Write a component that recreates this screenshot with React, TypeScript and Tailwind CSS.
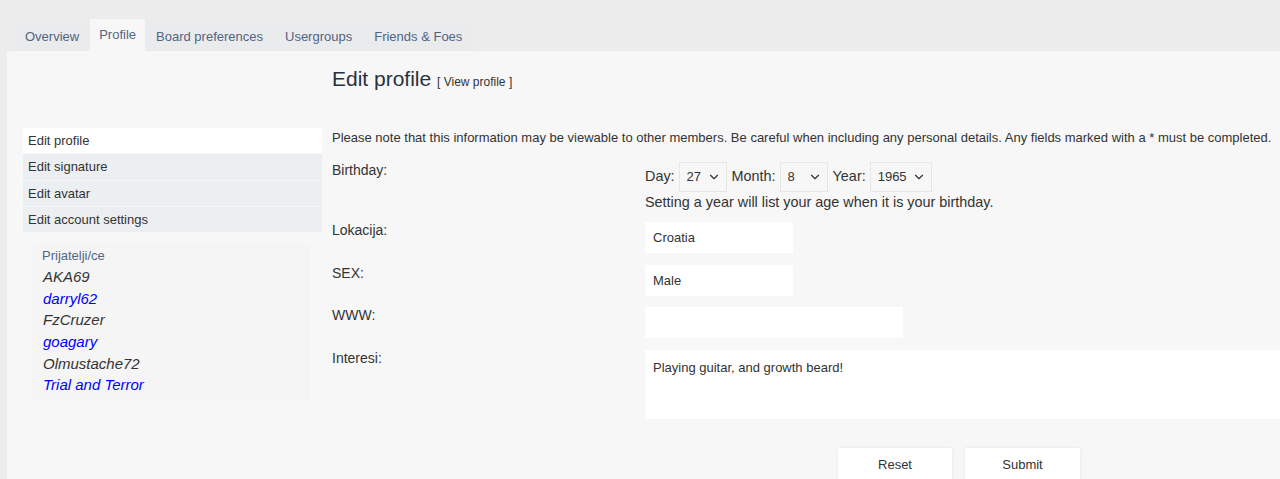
import { ChevronDown } from 'lucide-react'

const tabs = ['Overview', 'Profile', 'Board preferences', 'Usergroups', 'Friends & Foes']
const menu = ['Edit profile', 'Edit signature', 'Edit avatar', 'Edit account settings']
const friends = [
  { name: 'AKA69', online: false },
  { name: 'darryl62', online: true },
  { name: 'FzCruzer', online: false },
  { name: 'goagary', online: true },
  { name: 'Olmustache72', online: false },
  { name: 'Trial and Terror', online: true },
]

function Select({ value, width }: { value: string; width: string }) {
  return (
    <span className={`relative inline-block ${width}`}>
      <select
        defaultValue={value}
        className="h-[30px] w-full appearance-none border border-[#e6e6e6] bg-[#f7f7f7] pl-[7px] text-[13px] text-[#333] outline-none"
      >
        <option>{value}</option>
      </select>
      <ChevronDown size={14} strokeWidth={2} className="pointer-events-none absolute right-[6px] top-[8px] text-[#333]" />
    </span>
  )
}

function Row({ label, children, className = '' }: { label: string; children: React.ReactNode; className?: string }) {
  return (
    <div className={`grid grid-cols-[313px_1fr] ${className}`}>
      <label className="text-[14px] leading-[17px] text-[#333]">{label}</label>
      <div>{children}</div>
    </div>
  )
}

export default function App() {
  return (
    <div className="min-h-screen overflow-hidden bg-[#ececec] font-['Liberation_Sans',Arial,sans-serif] text-[#333]">
      {/* Tabs */}
      <nav className="flex pl-[14px] pt-[19px]">
        {tabs.map((t) => (
          <div
            key={t}
            className={
              t === 'Profile'
                ? 'h-[32px] bg-[#f7f7f7] px-[9px] pt-[6px] text-[13px] text-[#536482]'
                : 'h-[32px] bg-[#e9ebed] px-[11px] pt-[8px] text-[13px] text-[#536482]'
            }
          >
            {t}
          </div>
        ))}
      </nav>

      <div className="ml-[7px] flex min-h-[428px] bg-[#f7f7f7]">
        {/* Sidebar */}
        <aside className="w-[315px] shrink-0 pl-[16px] pt-[77px]">
          <ul className="w-[299px]">
            {menu.map((m, i) => (
              <li
                key={m}
                className={`h-[26.3px] border-b border-[#f4f5f6] pl-[5px] text-[13px] leading-[26px] text-[#333] ${
                  i === 0 ? 'bg-white' : 'bg-[#eceff1]'
                }`}
              >
                {m}
              </li>
            ))}
          </ul>
          <div className="ml-[10px] mt-[10px] w-[277px] bg-[#f5f5f5] pb-[4px] pl-[9px] pt-[5px]">
            <div className="text-[13px] leading-[16px] text-[#536482]">Prijatelji/ce</div>
            <ul className="mt-[2px] pl-[1px]">
              {friends.map((f) => (
                <li
                  key={f.name}
                  className={`text-[15px] italic leading-[21.6px] ${f.online ? 'text-[#0000ff]' : 'text-[#333]'}`}
                >
                  {f.name}
                </li>
              ))}
            </ul>
          </div>
        </aside>

        {/* Main form */}
        <main className="flex-1 pl-[10px] pt-[15px]">
          <h2 className="text-[21px] leading-[26px] text-[#28313f]">
            Edit profile <span className="text-[12px] text-[#333]">[ View profile ]</span>
          </h2>
          <p className="mt-[35px] whitespace-nowrap text-[13px] leading-[16px]">
            Please note that this information may be viewable to other members. Be careful when including any personal details. Any fields marked with a * must be completed.
          </p>

          <div className="mt-[16px]">
            <Row label="Birthday:" className="mb-[11px]">
              <div className="flex items-center gap-[4px] text-[14.4px]">
                <span>Day:</span>
                <Select value="27" width="w-[48px]" />
                <span className="ml-[1px]">Month:</span>
                <Select value="8" width="w-[48px]" />
                <span className="ml-[1px]">Year:</span>
                <Select value="1965" width="w-[62px]" />
              </div>
              <div className="mt-[1px] text-[14.4px] leading-[18px]">Setting a year will list your age when it is your birthday.</div>
            </Row>
            <Row label="Lokacija:" className="mb-[12px]">
              <input defaultValue="Croatia" className="h-[31px] w-[148px] bg-white pl-[8px] text-[13px] text-[#333] outline-none" />
            </Row>
            <Row label="SEX:" className="mb-[11px]">
              <input defaultValue="Male" className="h-[31px] w-[148px] bg-white pl-[8px] text-[13px] text-[#333] outline-none" />
            </Row>
            <Row label="WWW:" className="mb-[12px]">
              <input defaultValue="" className="h-[31px] w-[258px] bg-white pl-[8px] text-[13px] text-[#333] outline-none" />
            </Row>
            <Row label="Interesi:">
              <textarea
                defaultValue="Playing guitar, and growth beard!"
                className="block h-[69px] w-full resize-none bg-white px-[8px] pt-[10px] text-[13px] leading-[16px] text-[#333] outline-none"
              />
            </Row>
          </div>

          <div className="mt-[29px] grid grid-cols-[313px_1fr]">
            <div />
            <div className="flex justify-center gap-[13px] pr-[7px]">
              <button className="h-[34px] w-[114px] bg-white text-[13px] text-[#333] shadow-[0_0_3px_rgba(0,0,0,0.08)]">Reset</button>
              <button className="h-[34px] w-[115px] bg-white text-[13px] text-[#333] shadow-[0_0_3px_rgba(0,0,0,0.08)]">Submit</button>
            </div>
          </div>
        </main>
      </div>
    </div>
  )
}
